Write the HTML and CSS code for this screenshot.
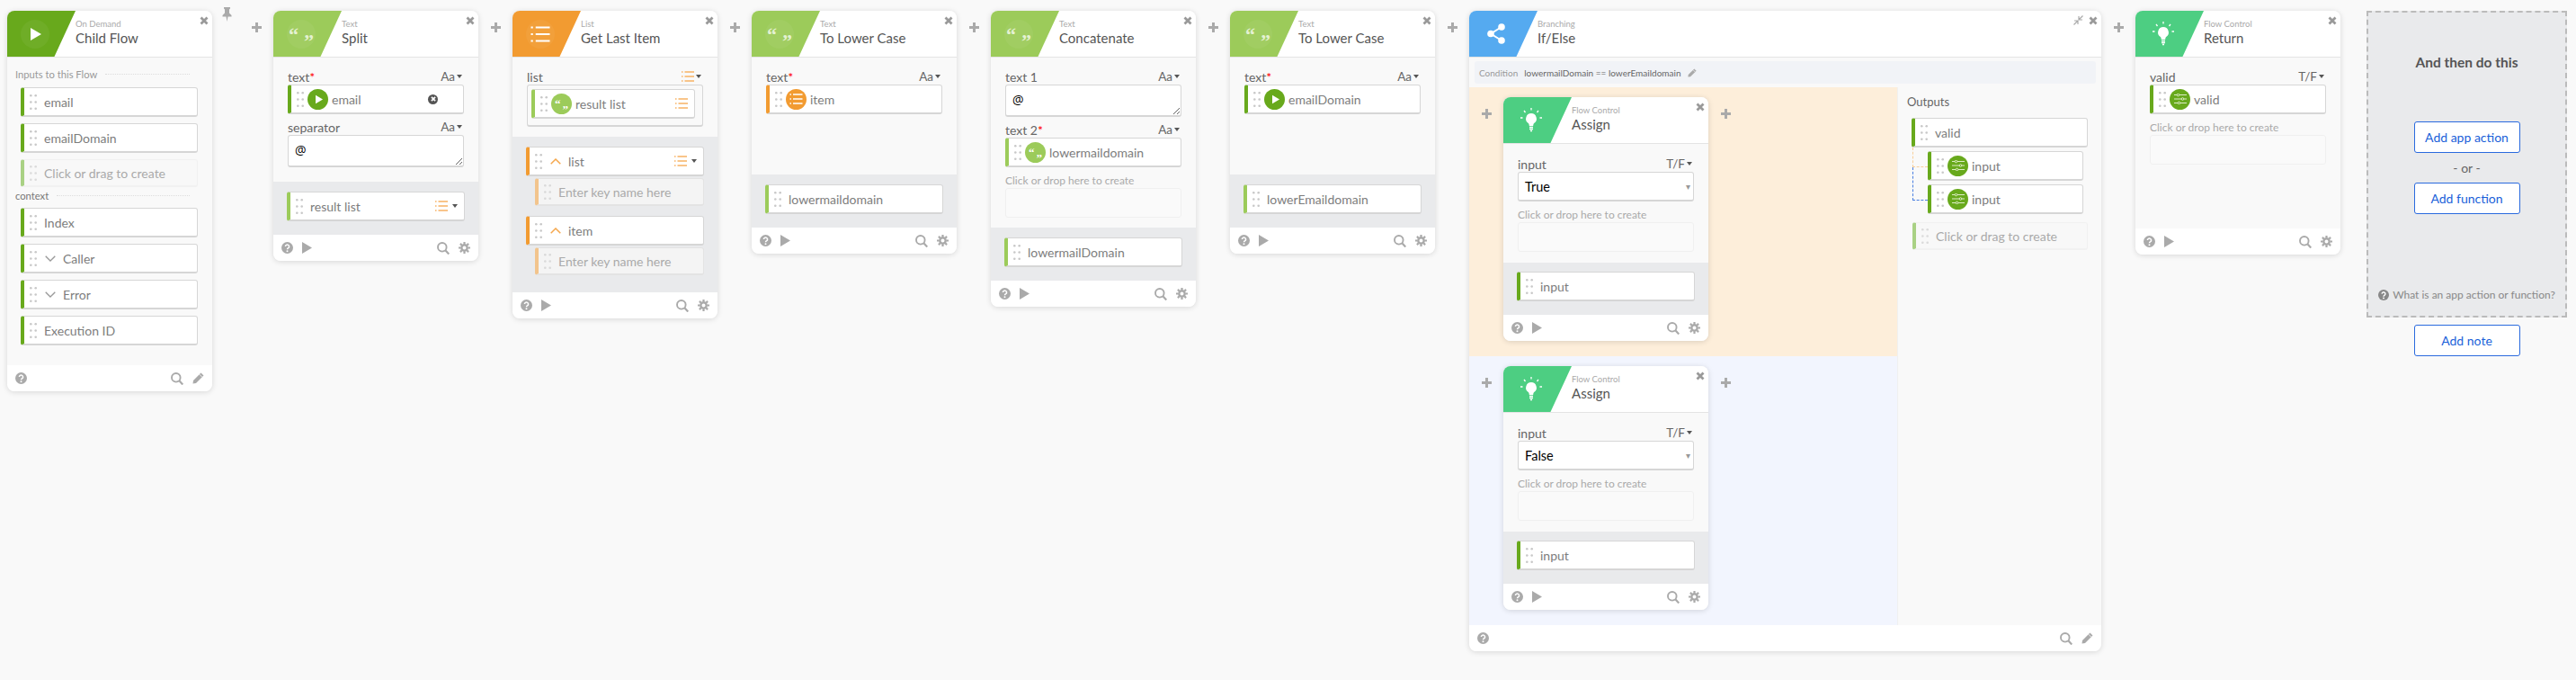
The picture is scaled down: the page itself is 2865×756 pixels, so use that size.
FILE: index.html
```html
<!DOCTYPE html>
<html lang="en">
<head>
    <meta charset="UTF-8">
    <meta name="viewport" content="width=device-width, initial-scale=1.0">
    <title>Child Flow</title>
    <link rel="stylesheet" href="styles.css">
</head>
<body>
    <!-- shared icons -->
    <svg class="defs" xmlns="http://www.w3.org/2000/svg">
        <symbol id="i-play" viewBox="0 0 12 14"><path d="M0 0 12 7 0 14z" fill="currentColor"/></symbol>
        <symbol id="i-x" viewBox="0 0 10 10"><path d="M1.5 1.5l7 7M8.5 1.5l-7 7" stroke="currentColor" stroke-width="2.8" fill="none"/></symbol>
        <symbol id="i-plus" viewBox="0 0 11 11"><path d="M5.5 0v11M0 5.5h11" stroke="currentColor" stroke-width="3" fill="none"/></symbol>
        <symbol id="i-pin" viewBox="0 0 11 16"><path d="M2 0h7v1.5L8 2.5v4l2.5 2.5V10.500H6.500L5.500 16 4.500 10.500H.5V9L3 6.500v-4L2 1.500z" fill="currentColor"/></symbol>
        <symbol id="i-grip" viewBox="0 0 8 17"><g fill="currentColor"><circle cx="1.300" cy="1.300" r="1.300"/><circle cx="6.700" cy="1.300" r="1.300"/><circle cx="1.300" cy="8.500" r="1.300"/><circle cx="6.700" cy="8.500" r="1.300"/><circle cx="1.300" cy="15.700" r="1.300"/><circle cx="6.700" cy="15.700" r="1.300"/></g></symbol>
        <symbol id="i-list" viewBox="0 0 14 12"><path d="M3.500 1H14M3.500 6H14M3.500 11H14M0 1h1.500M0 6h1.500M0 11h1.500" stroke="currentColor" stroke-width="1.400" fill="none"/></symbol>
        <symbol id="i-help" viewBox="0 0 13 13"><circle cx="6.500" cy="6.500" r="6.500" fill="currentColor"/><path d="M4.400 5a2.100 2 0 1 1 3.300 1.700C6.900 7.200 6.500 7.500 6.500 8.300" stroke="#fff" stroke-width="1.500" fill="none"/><circle cx="6.500" cy="10.200" r="1" fill="#fff"/></symbol>
        <symbol id="i-search" viewBox="0 0 14 14"><circle cx="5.800" cy="5.800" r="4.800" stroke="currentColor" stroke-width="1.900" fill="none"/><path d="M9.300 9.300 13.300 13.500" stroke="currentColor" stroke-width="2.200" fill="none"/></symbol>
        <symbol id="i-gear" viewBox="0 0 13 13"><circle cx="6.500" cy="6.500" r="3.200" stroke="currentColor" stroke-width="2.400" fill="none"/><path d="M6.500 0v2.500M6.500 10.500V13M0 6.500h2.500M10.500 6.500H13M1.900 1.900l1.800 1.800M9.300 9.300l1.800 1.800M11.100 1.900 9.300 3.700M3.700 9.300l-1.800 1.800" stroke="currentColor" stroke-width="2.200" fill="none"/></symbol>
        <symbol id="i-pencil" viewBox="0 0 13 13"><path d="M9.500.5 12.500 3.500 4 12 .5 12.500 1 9z" fill="currentColor"/><path d="M7.800 2.200l3 3" stroke="#fff" stroke-width=".8"/></symbol>
        <symbol id="i-down" viewBox="0 0 12 7"><path d="M.7.7 6 6 11.300.7" stroke="currentColor" stroke-width="1.300" fill="none"/></symbol>
        <symbol id="i-up" viewBox="0 0 12 7"><path d="M.7 6.300 6 1l5.300 5.300" stroke="currentColor" stroke-width="1.500" fill="none"/></symbol>
        <symbol id="i-share" viewBox="0 0 20 23"><g fill="currentColor"><circle cx="16" cy="4" r="3.800"/><circle cx="4" cy="11.500" r="3.800"/><circle cx="16" cy="19" r="3.800"/></g><path d="M16 4 4 11.500 16 19" stroke="currentColor" stroke-width="2" fill="none"/></symbol>
        <symbol id="i-bulb" viewBox="0 0 24 28"><path d="M12 6a6 6 0 0 0-3.500 10.800c.8.700 1.300 1.700 1.300 3.200h4.400c0-1.500.5-2.500 1.300-3.200A6 6 0 0 0 12 6z" fill="currentColor"/><path d="M10 21.500h4M10 23.500h4M11 25.500h2M12 0v2.500M4 3l1.500 2M20 3l-1.500 2M0 11h2.500M21.500 11H24" stroke="currentColor" stroke-width="1.300" fill="none"/></symbol>
        <symbol id="i-sliders" viewBox="0 0 14 12"><path d="M0 1.500h14M0 6h14M0 10.500h14" stroke="currentColor" stroke-width="1.100" fill="none"/><g fill="#68a91c" stroke="currentColor" stroke-width="1"><circle cx="4.500" cy="1.500" r="1.300"/><circle cx="9.500" cy="6" r="1.300"/><circle cx="5.500" cy="10.500" r="1.300"/></g></symbol>
        <symbol id="i-shrink" viewBox="0 0 11 11"><path d="M6.500 4.500 10.500.5M6 1v4h4M4.500 6.500l-4 4M1 6h4v4" stroke="currentColor" stroke-width="1.200" fill="none"/></symbol>
    </svg>

    <div class="canvas">

        <!-- trigger -->
        <div class="card">
            <svg class="close"><use href="#i-x"/></svg>
            <div class="head">
                <div class="badge bg-dark"><span class="disc"><svg class="ic-play"><use href="#i-play"/></svg></span></div>
                <div class="titles"><div class="kind">On Demand</div><div class="title">Child Flow</div></div>
            </div>
            <div class="flow-body">
                <div class="section">Inputs to this Flow</div>
                <div class="pill dark"><svg class="grip"><use href="#i-grip"/></svg><span class="name">email</span></div>
                <div class="pill dark"><svg class="grip"><use href="#i-grip"/></svg><span class="name">emailDomain</span></div>
                <div class="pill create"><svg class="grip"><use href="#i-grip"/></svg><span class="name">Click or drag to create</span></div>
                <div class="section ctx">context</div>
                <div class="pill dark"><svg class="grip"><use href="#i-grip"/></svg><span class="name">Index</span></div>
                <div class="pill dark"><svg class="grip"><use href="#i-grip"/></svg><svg class="chev"><use href="#i-down"/></svg><span class="name">Caller</span></div>
                <div class="pill dark"><svg class="grip"><use href="#i-grip"/></svg><svg class="chev"><use href="#i-down"/></svg><span class="name">Error</span></div>
                <div class="pill dark"><svg class="grip"><use href="#i-grip"/></svg><span class="name">Execution ID</span></div>
            </div>
            <div class="foot">
                <svg class="ic-help"><use href="#i-help"/></svg>
                <span class="spacer"></span>
                <svg class="ic-search"><use href="#i-search"/></svg>
                <svg class="ic-gear"><use href="#i-pencil"/></svg>
            </div>
        </div>

        <div class="pin"><svg><use href="#i-pin"/></svg></div>
        <div class="link"><svg><use href="#i-plus"/></svg></div>

        <!-- split -->
        <div class="card">
            <svg class="close"><use href="#i-x"/></svg>
            <div class="head">
                <div class="badge bg-text"><span class="disc quotes"><span>“</span><span>”</span></span></div>
                <div class="titles"><div class="kind">Text</div><div class="title">Split</div></div>
            </div>
            <div class="inputs">
                <div class="label"><span>text<b class="req">*</b></span><span class="type">Aa<i class="caret"></i></span></div>
                <div class="pill dark field">
                    <svg class="grip"><use href="#i-grip"/></svg>
                    <span class="dot bg-dark"><svg class="ic-mini"><use href="#i-play"/></svg></span>
                    <span class="name">email</span>
                    <span class="clear"><svg><use href="#i-x"/></svg></span>
                </div>
                <div class="label"><span>separator</span><span class="type">Aa<i class="caret"></i></span></div>
                <textarea class="ta">@</textarea>
            </div>
            <div class="outputs">
                <div class="pill light">
                    <svg class="grip"><use href="#i-grip"/></svg><span class="name">result list</span>
                    <span class="trail"><svg class="ic-list"><use href="#i-list"/></svg><i class="caret"></i></span>
                </div>
            </div>
            <div class="foot">
                <svg class="ic-help"><use href="#i-help"/></svg><svg class="ic-run"><use href="#i-play"/></svg>
                <span class="spacer"></span>
                <svg class="ic-search"><use href="#i-search"/></svg><svg class="ic-gear"><use href="#i-gear"/></svg>
            </div>
        </div>

        <div class="link"><svg><use href="#i-plus"/></svg></div>

        <!-- get last item -->
        <div class="card">
            <svg class="close"><use href="#i-x"/></svg>
            <div class="head">
                <div class="badge bg-list"><span class="disc"><svg class="ic-head-list"><use href="#i-list"/></svg></span></div>
                <div class="titles"><div class="kind">List</div><div class="title">Get Last Item</div></div>
            </div>
            <div class="inputs">
                <div class="label"><span>list</span><span class="type"><svg class="ic-list"><use href="#i-list"/></svg><i class="caret"></i></span></div>
                <div class="list-box">
                    <div class="pill light">
                        <svg class="grip"><use href="#i-grip"/></svg>
                        <span class="dot bg-text quotes"><span>“</span><span>”</span></span>
                        <span class="name">result list</span>
                        <span class="trail"><svg class="ic-list"><use href="#i-list"/></svg></span>
                    </div>
                </div>
            </div>
            <div class="outputs long">
                <div class="pill orange">
                    <svg class="grip"><use href="#i-grip"/></svg><svg class="chev up"><use href="#i-up"/></svg><span class="name">list</span>
                    <span class="trail"><svg class="ic-list"><use href="#i-list"/></svg><i class="caret"></i></span>
                </div>
                <div class="pill key"><svg class="grip"><use href="#i-grip"/></svg><span class="name">Enter key name here</span></div>
                <div class="pill orange">
                    <svg class="grip"><use href="#i-grip"/></svg><svg class="chev up"><use href="#i-up"/></svg><span class="name">item</span>
                </div>
                <div class="pill key"><svg class="grip"><use href="#i-grip"/></svg><span class="name">Enter key name here</span></div>
            </div>
            <div class="foot">
                <svg class="ic-help"><use href="#i-help"/></svg><svg class="ic-run"><use href="#i-play"/></svg>
                <span class="spacer"></span>
                <svg class="ic-search"><use href="#i-search"/></svg><svg class="ic-gear"><use href="#i-gear"/></svg>
            </div>
        </div>

        <div class="link"><svg><use href="#i-plus"/></svg></div>

        <!-- to lower case -->
        <div class="card">
            <svg class="close"><use href="#i-x"/></svg>
            <div class="head">
                <div class="badge bg-text"><span class="disc quotes"><span>“</span><span>”</span></span></div>
                <div class="titles"><div class="kind">Text</div><div class="title">To Lower Case</div></div>
            </div>
            <div class="inputs short">
                <div class="label"><span>text<b class="req">*</b></span><span class="type">Aa<i class="caret"></i></span></div>
                <div class="pill orange field">
                    <svg class="grip"><use href="#i-grip"/></svg>
                    <span class="dot bg-list"><svg class="ic-mini-list"><use href="#i-list"/></svg></span>
                    <span class="name">item</span>
                </div>
            </div>
            <div class="outputs">
                <div class="pill light"><svg class="grip"><use href="#i-grip"/></svg><span class="name">lowermaildomain</span></div>
            </div>
            <div class="foot">
                <svg class="ic-help"><use href="#i-help"/></svg><svg class="ic-run"><use href="#i-play"/></svg>
                <span class="spacer"></span>
                <svg class="ic-search"><use href="#i-search"/></svg><svg class="ic-gear"><use href="#i-gear"/></svg>
            </div>
        </div>

        <div class="link"><svg><use href="#i-plus"/></svg></div>

        <!-- concatenate -->
        <div class="card">
            <svg class="close"><use href="#i-x"/></svg>
            <div class="head">
                <div class="badge bg-text"><span class="disc quotes"><span>“</span><span>”</span></span></div>
                <div class="titles"><div class="kind">Text</div><div class="title">Concatenate</div></div>
            </div>
            <div class="inputs">
                <div class="label"><span>text 1</span><span class="type">Aa<i class="caret"></i></span></div>
                <textarea class="ta">@</textarea>
                <div class="label"><span>text 2<b class="req">*</b></span><span class="type">Aa<i class="caret"></i></span></div>
                <div class="pill light field">
                    <svg class="grip"><use href="#i-grip"/></svg>
                    <span class="dot bg-text quotes"><span>“</span><span>”</span></span>
                    <span class="name">lowermaildomain</span>
                </div>
                <div class="label hint"><span>Click or drop here to create</span></div>
                <div class="drop"></div>
            </div>
            <div class="outputs">
                <div class="pill light"><svg class="grip"><use href="#i-grip"/></svg><span class="name">lowermailDomain</span></div>
            </div>
            <div class="foot">
                <svg class="ic-help"><use href="#i-help"/></svg><svg class="ic-run"><use href="#i-play"/></svg>
                <span class="spacer"></span>
                <svg class="ic-search"><use href="#i-search"/></svg><svg class="ic-gear"><use href="#i-gear"/></svg>
            </div>
        </div>

        <div class="link"><svg><use href="#i-plus"/></svg></div>

        <!-- to lower case -->
        <div class="card">
            <svg class="close"><use href="#i-x"/></svg>
            <div class="head">
                <div class="badge bg-text"><span class="disc quotes"><span>“</span><span>”</span></span></div>
                <div class="titles"><div class="kind">Text</div><div class="title">To Lower Case</div></div>
            </div>
            <div class="inputs short">
                <div class="label"><span>text<b class="req">*</b></span><span class="type">Aa<i class="caret"></i></span></div>
                <div class="pill dark field">
                    <svg class="grip"><use href="#i-grip"/></svg>
                    <span class="dot bg-dark"><svg class="ic-mini"><use href="#i-play"/></svg></span>
                    <span class="name">emailDomain</span>
                </div>
            </div>
            <div class="outputs">
                <div class="pill light"><svg class="grip"><use href="#i-grip"/></svg><span class="name">lowerEmaildomain</span></div>
            </div>
            <div class="foot">
                <svg class="ic-help"><use href="#i-help"/></svg><svg class="ic-run"><use href="#i-play"/></svg>
                <span class="spacer"></span>
                <svg class="ic-search"><use href="#i-search"/></svg><svg class="ic-gear"><use href="#i-gear"/></svg>
            </div>
        </div>

        <div class="link"><svg><use href="#i-plus"/></svg></div>

        <!-- if/else -->
        <div class="card wide">
            <svg class="shrink"><use href="#i-shrink"/></svg>
            <svg class="close"><use href="#i-x"/></svg>
            <div class="head">
                <div class="badge bg-branch"><svg class="ic-share"><use href="#i-share"/></svg></div>
                <div class="titles"><div class="kind">Branching</div><div class="title">If/Else</div></div>
            </div>
            <div class="cond-wrap">
                <div class="cond">
                    <span class="cond-key">Condition</span>
                    <span>lowermailDomain == lowerEmaildomain</span>
                    <svg class="ic-edit"><use href="#i-pencil"/></svg>
                </div>
            </div>
            <div class="branches">
                <div class="branch yes">
                    <div class="link"><svg><use href="#i-plus"/></svg></div>
                    <div class="card">
                        <svg class="close"><use href="#i-x"/></svg>
                        <div class="head">
                            <div class="badge bg-flow"><svg class="ic-bulb"><use href="#i-bulb"/></svg></div>
                            <div class="titles"><div class="kind">Flow Control</div><div class="title">Assign</div></div>
                        </div>
                        <div class="inputs assign">
                            <div class="label"><span>input</span><span class="type">T/F<i class="caret"></i></span></div>
                            <div class="select">True<span class="arrow">▾</span></div>
                            <div class="label hint"><span>Click or drop here to create</span></div>
                            <div class="drop"></div>
                        </div>
                        <div class="outputs tight">
                            <div class="pill dark"><svg class="grip"><use href="#i-grip"/></svg><span class="name">input</span></div>
                        </div>
                        <div class="foot">
                            <svg class="ic-help"><use href="#i-help"/></svg><svg class="ic-run"><use href="#i-play"/></svg>
                            <span class="spacer"></span>
                            <svg class="ic-search"><use href="#i-search"/></svg><svg class="ic-gear"><use href="#i-gear"/></svg>
                        </div>
                    </div>
                    <div class="link"><svg><use href="#i-plus"/></svg></div>
                </div>
                <div class="side">
                    <div class="side-title">Outputs</div>
                    <div class="tree">
                        <div class="pill dark"><svg class="grip"><use href="#i-grip"/></svg><span class="name">valid</span></div>
                        <div class="pill dark sub">
                            <svg class="grip"><use href="#i-grip"/></svg>
                            <span class="dot bg-dark"><svg class="ic-sliders"><use href="#i-sliders"/></svg></span>
                            <span class="name">input</span>
                        </div>
                        <div class="pill dark sub">
                            <svg class="grip"><use href="#i-grip"/></svg>
                            <span class="dot bg-dark"><svg class="ic-sliders"><use href="#i-sliders"/></svg></span>
                            <span class="name">input</span>
                        </div>
                        <span class="wire wire-true"></span>
                        <span class="wire wire-false"></span>
                    </div>
                    <div class="pill create"><svg class="grip"><use href="#i-grip"/></svg><span class="name">Click or drag to create</span></div>
                </div>
                <div class="branch no">
                    <div class="link"><svg><use href="#i-plus"/></svg></div>
                    <div class="card">
                        <svg class="close"><use href="#i-x"/></svg>
                        <div class="head">
                            <div class="badge bg-flow"><svg class="ic-bulb"><use href="#i-bulb"/></svg></div>
                            <div class="titles"><div class="kind">Flow Control</div><div class="title">Assign</div></div>
                        </div>
                        <div class="inputs assign">
                            <div class="label"><span>input</span><span class="type">T/F<i class="caret"></i></span></div>
                            <div class="select">False<span class="arrow">▾</span></div>
                            <div class="label hint"><span>Click or drop here to create</span></div>
                            <div class="drop"></div>
                        </div>
                        <div class="outputs tight">
                            <div class="pill dark"><svg class="grip"><use href="#i-grip"/></svg><span class="name">input</span></div>
                        </div>
                        <div class="foot">
                            <svg class="ic-help"><use href="#i-help"/></svg><svg class="ic-run"><use href="#i-play"/></svg>
                            <span class="spacer"></span>
                            <svg class="ic-search"><use href="#i-search"/></svg><svg class="ic-gear"><use href="#i-gear"/></svg>
                        </div>
                    </div>
                    <div class="link"><svg><use href="#i-plus"/></svg></div>
                </div>
            </div>
            <div class="foot">
                <svg class="ic-help"><use href="#i-help"/></svg>
                <span class="spacer"></span>
                <svg class="ic-search"><use href="#i-search"/></svg><svg class="ic-gear"><use href="#i-pencil"/></svg>
            </div>
        </div>

        <div class="link"><svg><use href="#i-plus"/></svg></div>

        <!-- return -->
        <div class="card">
            <svg class="close"><use href="#i-x"/></svg>
            <div class="head">
                <div class="badge bg-flow"><svg class="ic-bulb"><use href="#i-bulb"/></svg></div>
                <div class="titles"><div class="kind">Flow Control</div><div class="title">Return</div></div>
            </div>
            <div class="inputs tall">
                <div class="label"><span>valid</span><span class="type">T/F<i class="caret"></i></span></div>
                <div class="pill dark field">
                    <svg class="grip"><use href="#i-grip"/></svg>
                    <span class="dot bg-dark"><svg class="ic-sliders"><use href="#i-sliders"/></svg></span>
                    <span class="name">valid</span>
                </div>
                <div class="label hint"><span>Click or drop here to create</span></div>
                <div class="drop"></div>
            </div>
            <div class="foot">
                <svg class="ic-help"><use href="#i-help"/></svg><svg class="ic-run"><use href="#i-play"/></svg>
                <span class="spacer"></span>
                <svg class="ic-search"><use href="#i-search"/></svg><svg class="ic-gear"><use href="#i-gear"/></svg>
            </div>
        </div>

        <!-- next step -->
        <div class="next">
            <div class="next-box">
                <div class="next-title">And then do this</div>
                <button class="btn">Add app action</button>
                <div class="or">- or -</div>
                <button class="btn">Add function</button>
                <div class="next-help"><svg><use href="#i-help"/></svg>What is an app action or function?</div>
            </div>
            <button class="btn note">Add note</button>
        </div>
    </div>
</body>
</html>
```

FILE: styles.css
```css
* {
    box-sizing: border-box;
}
body {
    margin: 0;
    height: 756px;
    overflow: hidden;
    background-color: #f9f9f9;
    font-family: 'Lato', 'Open Sans', sans-serif;
    color: #666;
}
.defs {
    display: none;
}
.canvas {
    display: flex;
    align-items: flex-start;
    padding: 12px 0 0 8px;
}

/* cards */
.card {
    position: relative;
    flex: none;
    width: 228px;
    background-color: #f9f9f9;
    border-radius: 8px;
    box-shadow: 0 1px 6px rgba(0, 0, 0, 0.14);
    overflow: hidden;
}
.card.wide {
    width: 703px;
}
.close {
    position: absolute;
    top: 6px;
    right: 4px;
    width: 10px;
    height: 10px;
    color: #999;
}
.shrink {
    position: absolute;
    top: 5px;
    right: 20px;
    width: 11px;
    height: 11px;
    color: #aaa;
}
.head {
    display: flex;
    height: 52px;
    background-color: #fff;
    border-bottom: 1px solid #e4e4e4;
}
.badge {
    flex: none;
    width: 76px;
    height: 51px;
    display: flex;
    align-items: center;
    padding-left: 15px;
    clip-path: polygon(0 0, 100% 0, 69% 100%, 0 100%);
    color: #fff;
}
.bg-dark { background-color: #68a91c; }
.bg-text { background-color: #9ccb5a; }
.bg-list { background-color: #f29b31; }
.bg-branch { background-color: #55aaf0; }
.bg-flow { background-color: #4dce82; }
.disc {
    width: 32px;
    height: 32px;
    border-radius: 50%;
    background-color: rgba(255, 255, 255, 0.05);
    display: flex;
    align-items: center;
    justify-content: center;
}
.quotes {
    font-family: 'Liberation Serif', serif;
    font-weight: bold;
    font-size: 22px;
    line-height: 22px;
    gap: 6px;
    color: #e4f1d2;
}
.quotes span:first-child {
    align-self: flex-start;
    margin-top: 6px;
}
.quotes span:last-child {
    align-self: flex-end;
    margin-bottom: -3px;
}
.dot.quotes {
    font-size: 13px;
    line-height: 13px;
    gap: 2px;
}
.dot.quotes span:first-child {
    margin-top: 5px;
}
.dot.quotes span:last-child {
    margin-bottom: -1px;
}
.titles {
    padding-top: 9px;
}
.kind {
    font-size: 9.5px;
    line-height: 12px;
    color: #aaa;
}
.title {
    font-size: 15px;
    line-height: 18px;
    color: #555;
}
.ic-play { width: 12px; height: 14px; margin-left: 2px; }
.ic-head-list { width: 22px; height: 18px; }
.ic-share { width: 20px; height: 23px; margin-left: 5px; }
.ic-bulb { width: 24px; height: 28px; margin-left: 4px; }

/* connectors between cards */
.link {
    flex: none;
    width: 38px;
    padding-top: 13px;
    display: flex;
    justify-content: center;
    color: #aaa;
}
.link svg {
    width: 11px;
    height: 11px;
}
.pin {
    flex: none;
    width: 30px;
    margin-top: -4px;
    padding-left: 11px;
    color: #aaa;
}
.pin svg {
    width: 11px;
    height: 16px;
}

/* flow inputs */
.flow-body {
    padding: 9px 16px 15px 15px;
}
.section {
    display: flex;
    align-items: center;
    gap: 9px;
    height: 18px;
    margin: 0 9px 6px -6px;
    font-size: 11.2px;
    color: #999;
}
.section::after {
    content: "";
    flex: 1;
    border-top: 1px dotted #ddd;
}
.section.ctx {
    margin-bottom: 5px;
    color: #777;
}

/* variable pills */
.pill {
    display: flex;
    align-items: center;
    height: 33px;
    margin-bottom: 7px;
    background-color: #fff;
    border: 1px solid #d6d6d6;
    border-left: 4px solid #68a91c;
    border-bottom-width: 2px;
    border-radius: 3px;
    font-size: 14px;
    color: #7d7d7d;
    white-space: nowrap;
}
.pill.dark { border-left-color: #68a91c; }
.pill.light { border-left-color: #9ccb5a; }
.pill.orange { border-left-color: #f29b31; }
.pill.create {
    height: 31px;
    margin-bottom: 0;
    background-color: #f8f8f8;
    border-color: #f1f1f1;
    border-left-color: #a9d184;
    color: #aaa;
}
.pill.key {
    height: 31px;
    margin: 2px 0 11px 10px;
    background-color: #f4f4f4;
    border-color: #e3e3e3;
    border-left-color: #f2c48c;
    color: #aaa;
}
.pill.create .grip,
.pill.key .grip {
    opacity: 0.6;
}
.grip {
    flex: none;
    width: 8px;
    height: 17px;
    margin: 0 4px 0 6px;
    color: #c8c8c8;
}
.grip + .name {
    margin-left: 4px;
}
.chev {
    flex: none;
    width: 12px;
    height: 7px;
    margin-left: 5px;
    color: #999;
}
.chev.up {
    color: #f5a84e;
}
.chev + .name {
    margin-left: 8px;
}
.dot {
    flex: none;
    width: 23px;
    height: 23px;
    margin-right: 4px;
    border-radius: 50%;
    display: flex;
    align-items: center;
    justify-content: center;
    color: #fff;
}
.ic-mini { width: 8px; height: 11px; margin-left: 2px; }
.ic-mini-list { width: 15px; height: 12px; }
.ic-sliders { width: 14px; height: 12px; color: #dcecc4; }
.clear {
    margin-left: auto;
    margin-right: 28px;
    width: 11px;
    height: 11px;
    padding: 2.5px;
    border-radius: 50%;
    background-color: #555;
    color: #fff;
    display: flex;
}
.clear svg {
    width: 6px;
    height: 6px;
}
.trail {
    margin-left: auto;
    padding-right: 7px;
    display: flex;
    align-items: center;
    gap: 3px;
}
.ic-list {
    width: 14px;
    height: 12px;
    color: #f7b264;
}
.caret {
    display: inline-block;
    margin-left: 2px;
    border-top: 4px solid #555;
    border-left: 3.5px solid transparent;
    border-right: 3.5px solid transparent;
}

/* input side of a step */
.inputs {
    padding: 12px 16px 11px;
    font-size: 13px;
}
.inputs.short {
    min-height: 130px;
}
.inputs.tall {
    min-height: 190px;
}
.inputs.assign {
    padding: 13px 16px 12px;
}
.label {
    display: flex;
    justify-content: space-between;
    align-items: center;
    height: 18px;
    font-size: 14px;
    color: #666;
}
.label.hint {
    color: #aaa;
    font-size: 12px;
}
.req {
    color: #f00;
    font-weight: normal;
}
.type {
    display: flex;
    align-items: center;
    padding-right: 2px;
    font-size: 13.5px;
    color: #666;
}
.pill.field {
    margin-bottom: 5px;
}
.ta {
    display: block;
    width: 100%;
    height: 36px;
    margin: 0 0 5px;
    padding: 6px 7px;
    background-color: #fff;
    border: 1px solid #d6d6d6;
    border-bottom-width: 2px;
    border-radius: 3px;
    font-family: 'Open Sans', sans-serif;
    font-size: 14px;
    line-height: 20px;
    color: #000;
}
.select {
    display: flex;
    align-items: center;
    justify-content: space-between;
    height: 33px;
    margin-bottom: 5px;
    padding: 0 3px 0 7px;
    background-color: #fff;
    border: 1px solid #d6d6d6;
    border-bottom-width: 2px;
    border-radius: 3px;
    font-size: 14.5px;
    color: #000;
}
.arrow {
    font-size: 10px;
    color: #999;
}
.drop {
    height: 33px;
    background-color: #fafafa;
    border: 1px solid #f0f0f0;
    border-radius: 3px;
}
.list-box {
    height: 47px;
    padding: 4px 8px 0 4px;
    border: 1px solid #d6d6d6;
    border-bottom-width: 2px;
    border-radius: 3px;
}

/* output side */
.outputs {
    padding: 11px 15px 15px;
    background-color: #e9eaec;
}
.outputs .pill {
    margin-bottom: 0;
}
.outputs.tight {
    padding-top: 10px;
}
.outputs.long {
    padding-bottom: 8px;
}
.outputs.long .pill.key {
    margin-bottom: 11px;
}

.foot {
    display: flex;
    align-items: center;
    height: 29px;
    padding: 0 9px;
    background-color: #fff;
    color: #aaa;
}
.spacer {
    flex: 1;
}
.ic-help { width: 13px; height: 13px; }
.ic-run { width: 11px; height: 13px; margin-left: 10px; }
.ic-search { width: 14px; height: 14px; }
.ic-gear { width: 13px; height: 13px; margin-left: 10px; }

/* if/else */
.cond-wrap {
    padding: 4px 6px;
}
.cond {
    display: flex;
    align-items: center;
    gap: 7px;
    height: 25px;
    padding-left: 5px;
    background-color: #f1f3f7;
    border-radius: 3px;
    font-size: 10px;
    color: #666;
}
.cond-key {
    color: #999;
}
.ic-edit {
    width: 10px;
    height: 10px;
    color: #aaa;
}
.branches {
    display: grid;
    grid-template-columns: 476px 227px;
}
.branch {
    display: flex;
    align-items: flex-start;
    padding: 11px 0 17px;
}
.branch .link {
    padding-top: 13px;
}
.branch.yes { background-color: #fdeeda; }
.branch.no { background-color: #f2f5fe; }
.side {
    grid-row: 1 / span 2;
    grid-column: 2;
    padding: 7px 15px 0 10px;
    background-color: #f9f9f9;
    border-left: 1px solid #f0f0f0;
}
.branch.no {
    grid-column: 1;
}
.side-title {
    height: 18px;
    margin-bottom: 9px;
    font-size: 13px;
    line-height: 18px;
    color: #666;
}
.side .pill.create {
    margin-left: 6px;
}
.tree {
    position: relative;
    margin: 0 0 9px 5px;
}
.tree .pill {
    margin-bottom: 4px;
}
.tree .pill.sub {
    margin: 0 5px 4px 18px;
}
.wire {
    position: absolute;
    left: 1px;
    width: 17px;
    border-left: 1px dashed;
    border-bottom: 1px dashed;
}
.wire-true {
    top: 33px;
    height: 22px;
    border-color: #f8cf9a;
}
.wire-false {
    top: 55px;
    height: 37px;
    border-color: #4a7fe0;
}

/* next step */
.next {
    flex: none;
    width: 223px;
    margin-left: 29px;
    display: flex;
    flex-direction: column;
    align-items: center;
}
.next-box {
    width: 100%;
    height: 341px;
    display: flex;
    flex-direction: column;
    align-items: center;
    padding: 46px 0 16px;
    background-color: #e9eaec;
    border: 2px dashed #bbb;
}
.next-title {
    height: 18px;
    margin-bottom: 57px;
    font-size: 15.5px;
    line-height: 18px;
    font-weight: bold;
    color: #555;
}
.btn {
    width: 118px;
    height: 35px;
    padding: 0;
    background-color: #fff;
    border: 1px solid #2a6ade;
    border-radius: 3px;
    font-family: inherit;
    font-size: 14px;
    color: #1a5fd9;
}
.or {
    height: 33px;
    line-height: 33px;
    font-size: 14px;
    color: #666;
}
.next-help {
    margin-top: auto;
    display: flex;
    align-items: center;
    gap: 4px;
    font-size: 12px;
    color: #888;
    white-space: nowrap;
}
.next-help svg {
    width: 12px;
    height: 12px;
    color: #888;
}
.note {
    margin-top: 8px;
}
```
